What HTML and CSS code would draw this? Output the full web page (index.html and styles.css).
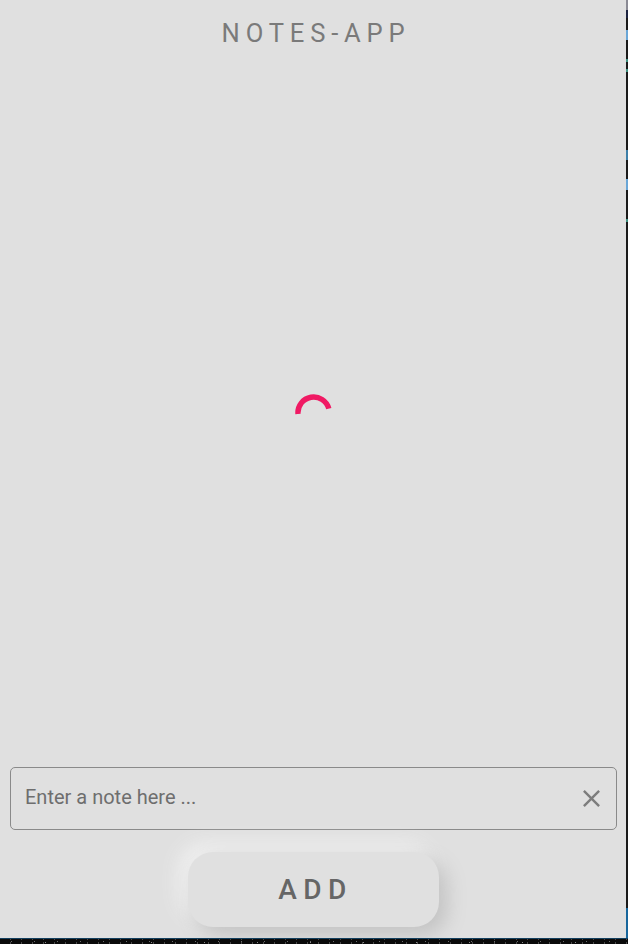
FILE: index.html
```html
<!DOCTYPE html>
<html lang="en">
<head>
    <meta charset="UTF-8">
    <meta name="viewport" content="width=device-width, initial-scale=1.0">
    <title>Notes-App</title>
    <link rel="stylesheet" href="styles.css">
</head>
<body>
    <div class="screen">
        <div class="app">
            <h1 class="title">NOTES-APP</h1>

            <!-- notes list, still loading -->
            <main class="notes">
                <svg class="spinner" width="40" height="40" viewBox="0 0 40 40" aria-label="Loading">
                    <path d="M5 20 A15.7 15.7 0 0 1 35.8 14.6" fill="none" stroke="#f01a64" stroke-width="5.4"/>
                </svg>
            </main>

            <form class="note-form" autocomplete="off">
                <div class="note-field">
                    <input class="note-input" type="text" placeholder="Enter a note here ...">
                    <button class="clear" type="button" aria-label="Clear">
                        <svg width="29" height="29" viewBox="0 0 24 24">
                            <path d="M19 6.41 17.59 5 12 10.59 6.41 5 5 6.41 10.59 12 5 17.59 6.41 19 12 13.41 17.59 19 19 17.59 13.41 12z" fill="#7d7d7d"/>
                        </svg>
                    </button>
                </div>
                <button class="add" type="button">ADD</button>
            </form>
        </div>
        <div class="edge"></div>
    </div>
    <div class="bottom"></div>
</body>
</html>
```

FILE: styles.css
```css
html, body {
    margin: 0;
    height: 100%;
    overflow: hidden;
}

body {
    display: flex;
    flex-direction: column;
    font-family: Roboto, "Liberation Sans", sans-serif;
    background: #0a0a0a;
}

.screen {
    display: flex;
    height: 938px;
}

.app {
    width: 626px;
    display: flex;
    flex-direction: column;
    background: #e0e0e0;
    overflow: hidden;
}

.title {
    margin: 0;
    padding: 18px 0 0 6px;
    height: 42px;
    font-size: 25.6px;
    line-height: 31px;
    font-weight: 400;
    letter-spacing: 5.8px;
    text-align: center;
    color: #7a7a7a;
}

.notes {
    flex: 1;
    display: flex;
    align-items: center;
    justify-content: center;
}

.note-form {
    display: flex;
    flex-direction: column;
    align-items: center;
    padding: 0 9px 11px 10px;
}

.note-field {
    align-self: stretch;
    height: 63px;
    box-sizing: border-box;
    display: flex;
    align-items: center;
    border: 1px solid #8a8a8a;
    border-radius: 5px;
    padding: 0 10px 0 14px;
}

.note-input {
    flex: 1;
    min-width: 0;
    margin-bottom: 4px;
    border: 0;
    padding: 0;
    outline: none;
    background: transparent;
    font-family: inherit;
    font-size: 20px;
    color: #616161;
}

.note-input::placeholder {
    color: #6e6e6e;
    opacity: 1;
}

.clear {
    display: flex;
    padding: 0;
    border: 0;
    background: none;
}

.add {
    width: 251px;
    height: 75px;
    margin-top: 22px;
    padding-left: 10px;
    border: 0;
    border-radius: 25px;
    background: #e0e0e0;
    box-shadow: 8px 8px 20px #c2c2c2, -8px -8px 20px #f2f2f2;
    font-family: inherit;
    font-size: 28px;
    font-weight: 500;
    letter-spacing: 6.4px;
    color: #666666;
}

.edge {
    width: 2px;
    background:
        linear-gradient(to bottom,
            #8a8a94 0 10px, #1c2340 10px 18px, #1a1a1a 18px 30px,
            #6aa6d6 30px 40px, #1a1a1a 40px 59px, #3f8f7f 59px 62px,
            #1a1a1a 62px 69px, #3f8f7f 69px 72px, #1a1a1a 72px 150px,
            #3d7fa8 150px 160px, #1a1a1a 160px 179px, #6aa6d6 179px 190px,
            #1a1a1a 190px 219px, #3f8f7f 219px 222px, #1a1a1a 222px 908px,
            #17669c 908px 938px);
}

/* noisy strip of whatever sat below the window */
.bottom {
    flex: 1;
    border-top: 1px solid #123f5e;
    background-color: #0a0a0a;
    background-image:
        radial-gradient(circle, #6e6e6e 0.5px, transparent 1px),
        radial-gradient(circle, #4a4a4a 0.5px, transparent 1px),
        radial-gradient(circle, #8a8a8a 0.5px, transparent 1px);
    background-size: 23px 5px, 11px 4px, 53px 5px;
    background-position: 0 0, 5px 2px, 19px 1px;
}
```
